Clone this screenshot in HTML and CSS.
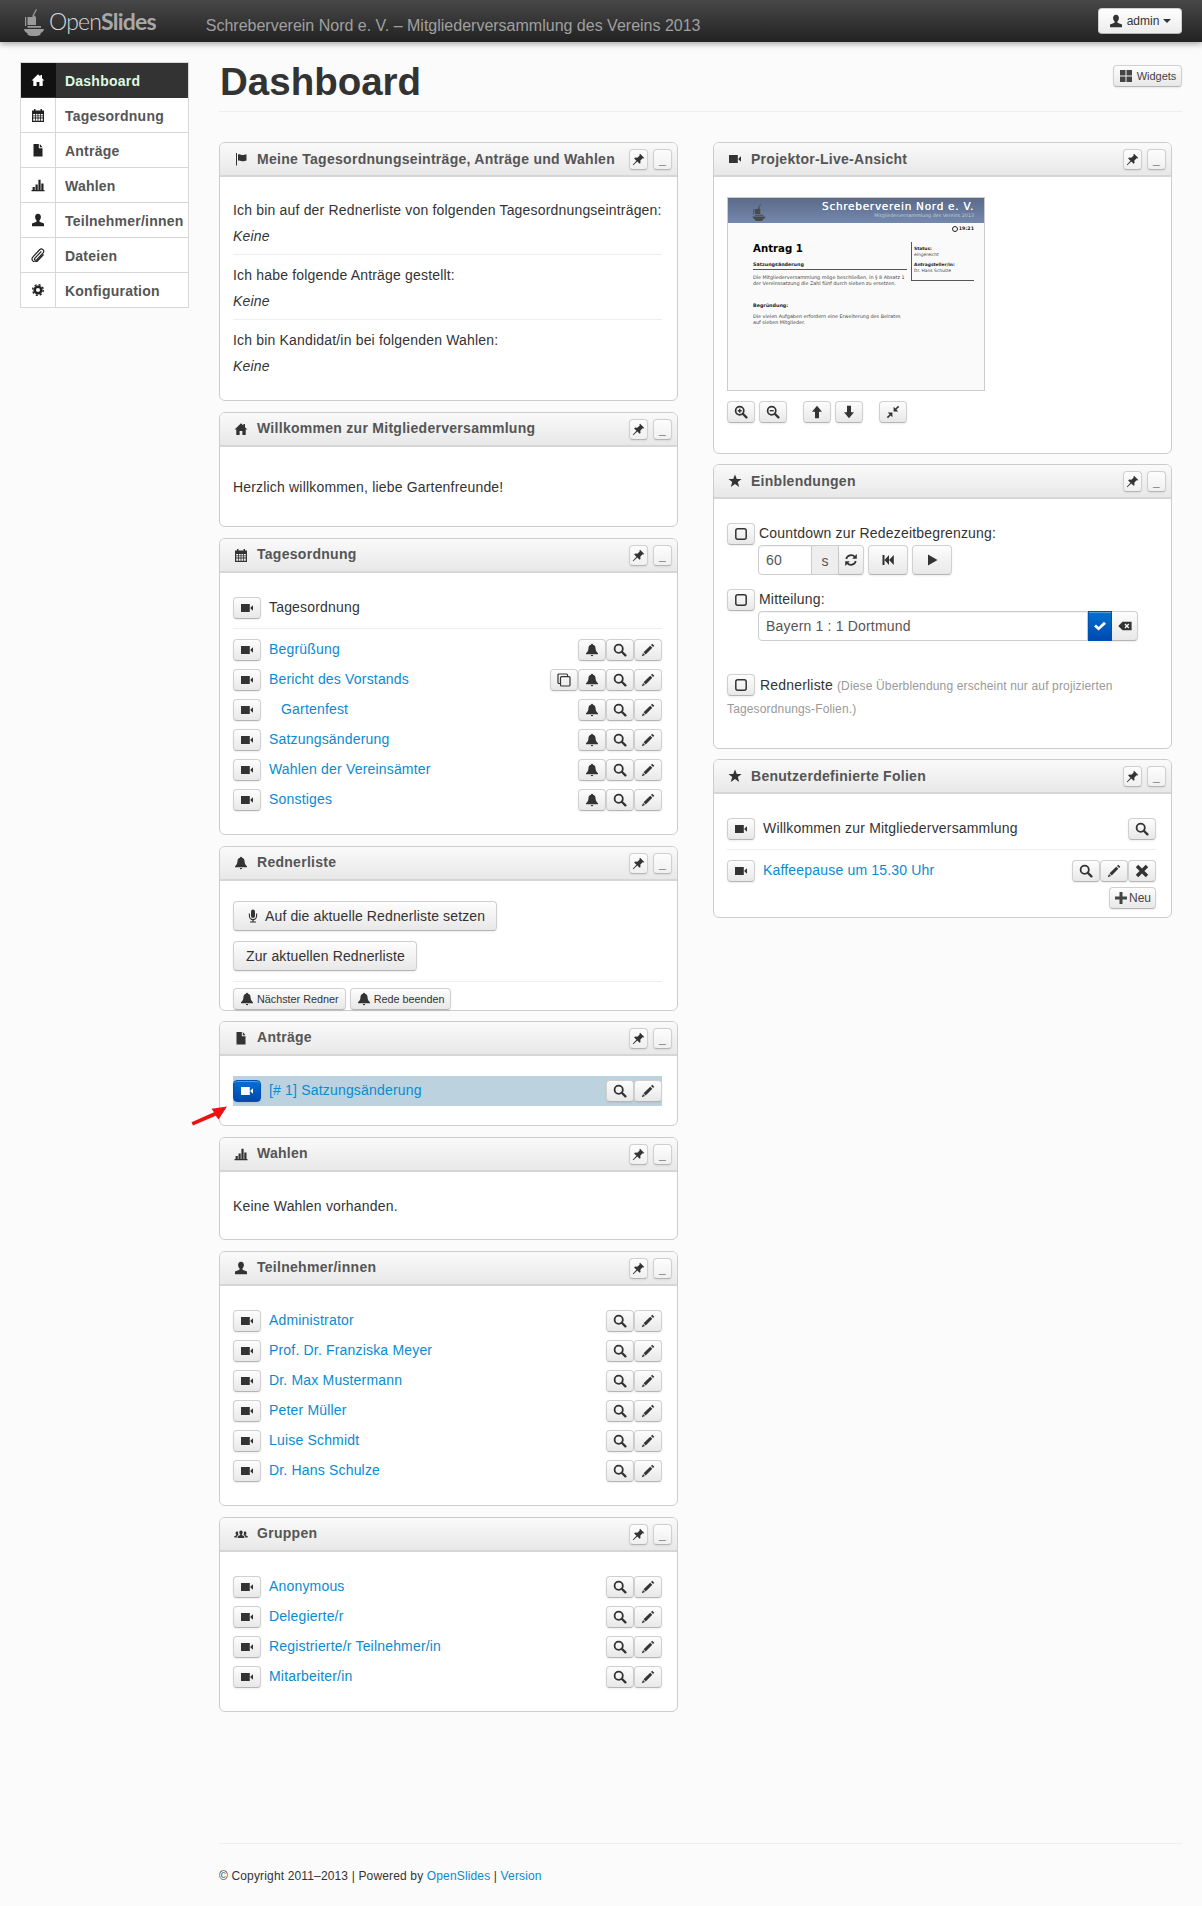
FILE: index.html
```html
<!DOCTYPE html>
<html lang="de">
<head>
<meta charset="utf-8">
<title>Dashboard – OpenSlides</title>
<link rel="stylesheet" href="styles.css">
</head>
<body>
<svg class="sprite" xmlns="http://www.w3.org/2000/svg">
<symbol id="home" viewBox="0 0 14 14"><path d="M7 1.2.6 7.6H2.3V13H5.6V9H8.4V13H11.7V7.6H13.4L11 5.2V2H9.4V3.6z"/></symbol>
<symbol id="cal" viewBox="0 0 14 14"><path fill-rule="evenodd" d="M1 2.5H3V1H4.5V2.5H9.500V1H11V2.500H13V14H1zM2.200 6V7.400H4V6zM4.800 6V7.400H6.600V6zM7.400 6V7.400H9.200V6zM10 6V7.400H11.800V6zM2.200 8.200V9.600H4V8.200zM4.800 8.200V9.600H6.600V8.200zM7.400 8.200V9.600H9.200V8.200zM10 8.200V9.600H11.800V8.200zM2.200 10.400V12.800H4V10.400zM4.800 10.400V12.800H6.600V10.400zM7.400 10.400V12.800H9.200V10.400zM10 10.400V12.800H11.800V10.400z"/></symbol>
<symbol id="file" viewBox="0 0 14 14"><path d="M2.500 1H7.800V5.200H11.500V13.500H2.500zM8.800 1 11.500 4.200H8.800z"/></symbol>
<symbol id="chart" viewBox="0 0 14 14"><path d="M.5 12H13.500V13.300H.5zM1.600 9H3.800V12H1.600zM4.500 6.500H6.700V12H4.500zM7.400 1.800H9.600V12H7.400zM10.300 5.500H12.500V12H10.300z"/></symbol>
<symbol id="user" viewBox="0 0 14 14"><path d="M7 .8C5.100.8 4.100 2.200 4.100 4c0 1.500.7 2.700 1.400 3.300V8.700L1 10.600V13.200H13V10.600L8.500 8.700V7.300C9.200 6.700 9.900 5.500 9.900 4 9.900 2.200 8.900.8 7 .8z"/></symbol>
<symbol id="clip" viewBox="0 0 14 14"><path fill="none" stroke="currentColor" stroke-width="1.200" d="M10.300 3.300 3.800 10.300A1.200 1.200 0 0 0 5.600 11.900L12.300 4.700A2.400 2.400 0 0 0 8.800 1.500L2 8.800A3 3 0 0 0 6.400 13L12.500 6.500"/></symbol>
<symbol id="cog" viewBox="0 0 14 14"><circle cx="7" cy="7" r="3.300" fill="none" stroke="currentColor" stroke-width="2.600"/><circle cx="7" cy="7" r="5.300" fill="none" stroke="currentColor" stroke-width="1.400" stroke-dasharray="2.100 2.060"/></symbol>
<symbol id="flag" viewBox="0 0 14 14"><path d="M2 1H3V13.500H2zM4 2.500C6 1.600 7 3 9 3S11.500 2.500 12.500 2.300V8.500C11.500 8.800 10.500 9.300 9 9.300 7 9.300 6 7.800 4 8.700z"/></symbol>
<symbol id="pin" viewBox="0 0 14 14"><path d="M8.700.8 13.200 5.300 12.300 6 11.400 5.700 8.900 8.300 9.200 10.700 8.200 11.700 5.700 9.200 1.400 13.200.8 12.600 4.800 8.300 2.300 5.800 3.300 4.800 5.700 5.100 8.300 2.600 8 1.700z"/></symbol>
<symbol id="video" viewBox="0 0 14 14"><path d="M1 3H9.800V11H1zM10.500 6.600 13 4.200V9.800L10.500 7.400z"/></symbol>
<symbol id="star" viewBox="0 0 14 14"><path d="M7 .6 8.800 5H13.600L9.800 8 11.200 12.900 7 10.100 2.800 12.900 4.200 8 .4 5H5.200z"/></symbol>
<symbol id="bell" viewBox="0 0 14 14"><path d="M7 .7A1 1 0 0 1 8 1.700C10 2.300 10.600 3.800 10.600 5.800 10.600 8 12 9.300 13 10.300V11.200H1V10.300C2 9.300 3.400 8 3.400 5.800 3.400 3.800 4 2.300 6 1.700A1 1 0 0 1 7 .7zM5.800 12H8.200A1.200 1.200 0 0 1 5.800 12z"/></symbol>
<symbol id="search" viewBox="0 0 14 14"><circle cx="5.700" cy="5.700" r="4.100" fill="none" stroke="currentColor" stroke-width="1.800"/><path fill="none" stroke="currentColor" stroke-width="2.300" stroke-linecap="round" d="M8.800 8.800 12.400 12.400"/></symbol>
<symbol id="pencil" viewBox="0 0 14 14"><path d="M11.200.7 13.300 2.800 12.100 4 10 1.900zM9.200 2.700 11.300 4.800 4.700 11.400 2.600 9.300zM2 10 4 12 .8 13.200z"/></symbol>
<symbol id="copy" viewBox="0 0 14 14"><path fill="none" stroke="currentColor" stroke-width="1.200" d="M3.500 10.500H2A1 1 0 0 1 1 9.500V2A1 1 0 0 1 2 1H9.500A1 1 0 0 1 10.500 2V3.500M4.500 3.700H12A1 1 0 0 1 13 4.700V12A1 1 0 0 1 12 13H4.500A1 1 0 0 1 3.500 12V4.700A1 1 0 0 1 4.500 3.700z"/></symbol>
<symbol id="mic" viewBox="0 0 14 14"><path d="M5 2.500A2 2 0 0 1 9 2.500V7A2 2 0 0 1 5 7zM6.400 10.500H7.600V12.400H10V13.500H4V12.400H6.400z"/><path fill="none" stroke="currentColor" stroke-width="1.100" d="M3.400 4.500V7A3.600 3.600 0 0 0 10.600 7V4.500"/></symbol>
<symbol id="zin" viewBox="0 0 14 14"><circle cx="5.700" cy="5.700" r="4.100" fill="none" stroke="currentColor" stroke-width="1.700"/><path fill="none" stroke="currentColor" stroke-width="2.300" stroke-linecap="round" d="M8.800 8.800 12.400 12.400"/><path d="M5 3.700H6.400V5H7.700V6.400H6.400V7.700H5V6.400H3.700V5H5z"/></symbol>
<symbol id="zout" viewBox="0 0 14 14"><circle cx="5.700" cy="5.700" r="4.100" fill="none" stroke="currentColor" stroke-width="1.700"/><path fill="none" stroke="currentColor" stroke-width="2.300" stroke-linecap="round" d="M8.800 8.800 12.400 12.400"/><path d="M3.700 5H7.700V6.400H3.700z"/></symbol>
<symbol id="up" viewBox="0 0 14 14"><path d="M7 .8 12 6.800H9V13.200H5V6.800H2z"/></symbol>
<symbol id="down" viewBox="0 0 14 14"><path d="M7 13.200 12 7.200H9V.8H5V7.200H2z"/></symbol>
<symbol id="shrink" viewBox="0 0 14 14"><path d="M7.600 6.400V1.800L9.400 3.600 12 .8 13.200 2 10.400 4.600 12.200 6.400zM6.400 7.600V12.200L4.600 10.400 2 13.200.8 12 3.600 9.400 1.800 7.600z"/></symbol>
<symbol id="box" viewBox="0 0 14 14"><rect x="1.800" y="1.800" width="10.400" height="10.400" rx="2" fill="none" stroke="currentColor" stroke-width="1.500"/></symbol>
<symbol id="refresh" viewBox="0 0 14 14"><path fill="none" stroke="currentColor" stroke-width="1.700" d="M2.200 6A5 5 0 0 1 10.800 3.900M11.800 8A5 5 0 0 1 3.200 10.100"/><path d="M12.800 1V5.700H8.200zM1.200 13V8.300H5.800z"/></symbol>
<symbol id="fback" viewBox="0 0 14 14"><path d="M1.500 2H3.500V12H1.500zM3.500 7 8 2V12zM8 7 12.800 2V12z"/></symbol>
<symbol id="play" viewBox="0 0 14 14"><path d="M3 1.500 12.500 7 3 12.500z"/></symbol>
<symbol id="ok" viewBox="0 0 14 14"><path d="M1 7.600 3 5.600 5.600 8 11 2.700 13 4.700 5.600 11.500z"/></symbol>
<symbol id="bksp" viewBox="0 0 14 14"><path fill-rule="evenodd" d="M4.500 2.700H13.600V11.300H4.500L.3 7zM7.500 4.600 6.500 5.600 7.900 7 6.500 8.400 7.500 9.400 8.900 8 10.300 9.400 11.300 8.400 9.900 7 11.300 5.600 10.300 4.600 8.900 6z"/></symbol>
<symbol id="remove" viewBox="0 0 14 14"><path d="M3.200 .8 7 4.600 10.800 .8 13.200 3.200 9.400 7 13.200 10.800 10.800 13.200 7 9.400 3.200 13.200 .8 10.800 4.600 7 .8 3.200z"/></symbol>
<symbol id="plus" viewBox="0 0 14 14"><path d="M5.500 1H8.500V5.500H13V8.500H8.500V13H5.500V8.500H1V5.500H5.500z"/></symbol>
<symbol id="grid" viewBox="0 0 14 14"><path d="M1 1H6.500V6.500H1zM7.500 1H13V6.500H7.500zM1 7.500H6.500V13H1zM7.500 7.500H13V13H7.500z"/></symbol>
<symbol id="group" viewBox="0 0 14 14"><path d="M7 3.500C5.800 3.500 5.300 4.400 5.300 5.500 5.300 6.300 5.700 7 6.200 7.400V8.100L3.700 9.300V11H10.300V9.300L7.800 8.100V7.400C8.300 7 8.700 6.300 8.700 5.500 8.700 4.400 8.200 3.500 7 3.500zM3 4.600C2 4.600 1.600 5.300 1.600 6.200 1.600 6.900 1.900 7.400 2.300 7.700V8.300L.3 9.300V10.600H2.900V9L4.600 8.100C4.200 7.600 4 6.900 4 6.100 4 5.700 4 5.300 4.200 5 3.900 4.700 3.500 4.600 3 4.600zM11 4.600C10.500 4.600 10.100 4.700 9.800 5 10 5.300 10 5.700 10 6.100 10 6.900 9.800 7.600 9.400 8.100L11.100 9V10.600H13.700V9.300L11.700 8.300V7.700C12.100 7.400 12.400 6.900 12.400 6.200 12.400 5.300 12 4.600 11 4.600z"/></symbol>
<symbol id="logo" viewBox="0 0 22 30"><path d="M2 11H3.200V20H2zM1 23H21C20.800 25 19.500 26.500 17.500 27.300V28.500C17.500 29.300 15 30 11 30S4.500 29.300 4.500 28.500V27.300C2.500 26.500 1.200 25 1 23z"/><path d="M4.500 20H18V21.700H4.500zM4.500 11H9.500V9.500L13 3 14 3.600 11 9.500 13 11V19H4.500z"/></symbol>
</svg>

<header class="navbar">
  <a class="brand"><svg class="logo"><use href="#logo"/></svg><span class="brand-name"><span class="brand-light">Open</span><span class="brand-bold">Slides</span></span></a>
  <span class="event">Schreberverein Nord e. V. – Mitgliederversammlung des Vereins 2013</span>
  <button class="btn btn-user"><svg class="i"><use href="#user"/></svg> admin <span class="caret"></span></button>
</header>

<div class="page">
  <nav class="sidenav">
    <a class="nav-item active"><span class="nav-ic"><svg class="i"><use href="#home"/></svg></span><span class="nav-tx">Dashboard</span></a>
    <a class="nav-item"><span class="nav-ic"><svg class="i"><use href="#cal"/></svg></span><span class="nav-tx">Tagesordnung</span></a>
    <a class="nav-item"><span class="nav-ic"><svg class="i"><use href="#file"/></svg></span><span class="nav-tx">Anträge</span></a>
    <a class="nav-item"><span class="nav-ic"><svg class="i"><use href="#chart"/></svg></span><span class="nav-tx">Wahlen</span></a>
    <a class="nav-item"><span class="nav-ic"><svg class="i"><use href="#user"/></svg></span><span class="nav-tx">Teilnehmer/innen</span></a>
    <a class="nav-item"><span class="nav-ic"><svg class="i"><use href="#clip"/></svg></span><span class="nav-tx">Dateien</span></a>
    <a class="nav-item"><span class="nav-ic"><svg class="i"><use href="#cog"/></svg></span><span class="nav-tx">Konfiguration</span></a>
  </nav>

  <main class="main">
    <div class="page-head">
      <h1>Dashboard</h1>
      <button class="btn btn-widgets"><svg class="i"><use href="#grid"/></svg> Widgets</button>
    </div>

    <div class="columns">
      <div class="col col-left">
        <section class="widget">
          <div class="w-head"><svg class="i"><use href="#flag"/></svg><h3>Meine Tagesordnungseinträge, Anträge und Wahlen</h3><span class="w-acts"><button class="btn w-btn"><svg class="i i-s"><use href="#pin"/></svg></button><button class="btn w-btn w-min">_</button></span></div>
          <div class="w-body b-mine">
            <div class="mine"><p>Ich bin auf der Rednerliste von folgenden Tagesordnungseinträgen:</p><p><em>Keine</em></p></div>
            <div class="mine"><p>Ich habe folgende Anträge gestellt:</p><p><em>Keine</em></p></div>
            <div class="mine"><p>Ich bin Kandidat/in bei folgenden Wahlen:</p><p><em>Keine</em></p></div>
          </div>
        </section>

        <section class="widget">
          <div class="w-head"><svg class="i"><use href="#home"/></svg><h3>Willkommen zur Mitgliederversammlung</h3><span class="w-acts"><button class="btn w-btn"><svg class="i i-s"><use href="#pin"/></svg></button><button class="btn w-btn w-min">_</button></span></div>
          <div class="w-body b-welcome">Herzlich willkommen, liebe Gartenfreunde!</div>
        </section>

        <section class="widget">
          <div class="w-head"><svg class="i"><use href="#cal"/></svg><h3>Tagesordnung</h3><span class="w-acts"><button class="btn w-btn"><svg class="i i-s"><use href="#pin"/></svg></button><button class="btn w-btn w-min">_</button></span></div>
          <div class="w-body">
            <div class="row row-sep"><button class="btn sq"><svg class="i"><use href="#video"/></svg></button><span class="row-tx">Tagesordnung</span></div>
            <div class="row"><button class="btn sq"><svg class="i"><use href="#video"/></svg></button><a class="row-tx link">Begrüßung</a><span class="acts"><button class="btn sq"><svg class="i"><use href="#bell"/></svg></button><button class="btn sq"><svg class="i"><use href="#search"/></svg></button><button class="btn sq"><svg class="i"><use href="#pencil"/></svg></button></span></div>
            <div class="row"><button class="btn sq"><svg class="i"><use href="#video"/></svg></button><a class="row-tx link">Bericht des Vorstands</a><span class="acts"><button class="btn sq"><svg class="i"><use href="#copy"/></svg></button><button class="btn sq"><svg class="i"><use href="#bell"/></svg></button><button class="btn sq"><svg class="i"><use href="#search"/></svg></button><button class="btn sq"><svg class="i"><use href="#pencil"/></svg></button></span></div>
            <div class="row"><button class="btn sq"><svg class="i"><use href="#video"/></svg></button><a class="row-tx link indent">Gartenfest</a><span class="acts"><button class="btn sq"><svg class="i"><use href="#bell"/></svg></button><button class="btn sq"><svg class="i"><use href="#search"/></svg></button><button class="btn sq"><svg class="i"><use href="#pencil"/></svg></button></span></div>
            <div class="row"><button class="btn sq"><svg class="i"><use href="#video"/></svg></button><a class="row-tx link">Satzungsänderung</a><span class="acts"><button class="btn sq"><svg class="i"><use href="#bell"/></svg></button><button class="btn sq"><svg class="i"><use href="#search"/></svg></button><button class="btn sq"><svg class="i"><use href="#pencil"/></svg></button></span></div>
            <div class="row"><button class="btn sq"><svg class="i"><use href="#video"/></svg></button><a class="row-tx link">Wahlen der Vereinsämter</a><span class="acts"><button class="btn sq"><svg class="i"><use href="#bell"/></svg></button><button class="btn sq"><svg class="i"><use href="#search"/></svg></button><button class="btn sq"><svg class="i"><use href="#pencil"/></svg></button></span></div>
            <div class="row"><button class="btn sq"><svg class="i"><use href="#video"/></svg></button><a class="row-tx link">Sonstiges</a><span class="acts"><button class="btn sq"><svg class="i"><use href="#bell"/></svg></button><button class="btn sq"><svg class="i"><use href="#search"/></svg></button><button class="btn sq"><svg class="i"><use href="#pencil"/></svg></button></span></div>
          </div>
        </section>

        <section class="widget w-tight">
          <div class="w-head"><svg class="i"><use href="#bell"/></svg><h3>Rednerliste</h3><span class="w-acts"><button class="btn w-btn"><svg class="i i-s"><use href="#pin"/></svg></button><button class="btn w-btn w-min">_</button></span></div>
          <div class="w-body b-speakers">
            <button class="btn big"><svg class="i"><use href="#mic"/></svg> Auf die aktuelle Rednerliste setzen</button>
            <button class="btn big">Zur aktuellen Rednerliste</button>
            <div class="speak-foot"><button class="btn small"><svg class="i"><use href="#bell"/></svg> Nächster Redner</button><button class="btn small"><svg class="i"><use href="#bell"/></svg> Rede beenden</button></div>
          </div>
        </section>

        <section class="widget w-motions">
          <div class="w-head"><svg class="i"><use href="#file"/></svg><h3>Anträge</h3><span class="w-acts"><button class="btn w-btn"><svg class="i i-s"><use href="#pin"/></svg></button><button class="btn w-btn w-min">_</button></span></div>
          <div class="w-body b-motions">
            <div class="row row-active"><button class="btn sq btn-primary"><svg class="i"><use href="#video"/></svg></button><a class="row-tx link">[# 1] Satzungsänderung</a><span class="acts"><button class="btn sq"><svg class="i"><use href="#search"/></svg></button><button class="btn sq"><svg class="i"><use href="#pencil"/></svg></button></span></div>
          </div>
          <svg class="red-arrow" viewBox="0 0 36 20"><path d="M36 .5 27.500 13.500 24.700 9.700 2 19.500.5 16.200 23 6.300 20.500 2.800z"/></svg>
        </section>

        <section class="widget">
          <div class="w-head"><svg class="i"><use href="#chart"/></svg><h3>Wahlen</h3><span class="w-acts"><button class="btn w-btn"><svg class="i i-s"><use href="#pin"/></svg></button><button class="btn w-btn w-min">_</button></span></div>
          <div class="w-body">Keine Wahlen vorhanden.</div>
        </section>

        <section class="widget">
          <div class="w-head"><svg class="i"><use href="#user"/></svg><h3>Teilnehmer/innen</h3><span class="w-acts"><button class="btn w-btn"><svg class="i i-s"><use href="#pin"/></svg></button><button class="btn w-btn w-min">_</button></span></div>
          <div class="w-body">
            <div class="row"><button class="btn sq"><svg class="i"><use href="#video"/></svg></button><a class="row-tx link">Administrator</a><span class="acts"><button class="btn sq"><svg class="i"><use href="#search"/></svg></button><button class="btn sq"><svg class="i"><use href="#pencil"/></svg></button></span></div>
            <div class="row"><button class="btn sq"><svg class="i"><use href="#video"/></svg></button><a class="row-tx link">Prof. Dr. Franziska Meyer</a><span class="acts"><button class="btn sq"><svg class="i"><use href="#search"/></svg></button><button class="btn sq"><svg class="i"><use href="#pencil"/></svg></button></span></div>
            <div class="row"><button class="btn sq"><svg class="i"><use href="#video"/></svg></button><a class="row-tx link">Dr. Max Mustermann</a><span class="acts"><button class="btn sq"><svg class="i"><use href="#search"/></svg></button><button class="btn sq"><svg class="i"><use href="#pencil"/></svg></button></span></div>
            <div class="row"><button class="btn sq"><svg class="i"><use href="#video"/></svg></button><a class="row-tx link">Peter Müller</a><span class="acts"><button class="btn sq"><svg class="i"><use href="#search"/></svg></button><button class="btn sq"><svg class="i"><use href="#pencil"/></svg></button></span></div>
            <div class="row"><button class="btn sq"><svg class="i"><use href="#video"/></svg></button><a class="row-tx link">Luise Schmidt</a><span class="acts"><button class="btn sq"><svg class="i"><use href="#search"/></svg></button><button class="btn sq"><svg class="i"><use href="#pencil"/></svg></button></span></div>
            <div class="row"><button class="btn sq"><svg class="i"><use href="#video"/></svg></button><a class="row-tx link">Dr. Hans Schulze</a><span class="acts"><button class="btn sq"><svg class="i"><use href="#search"/></svg></button><button class="btn sq"><svg class="i"><use href="#pencil"/></svg></button></span></div>
          </div>
        </section>

        <section class="widget">
          <div class="w-head"><svg class="i"><use href="#group"/></svg><h3>Gruppen</h3><span class="w-acts"><button class="btn w-btn"><svg class="i i-s"><use href="#pin"/></svg></button><button class="btn w-btn w-min">_</button></span></div>
          <div class="w-body">
            <div class="row"><button class="btn sq"><svg class="i"><use href="#video"/></svg></button><a class="row-tx link">Anonymous</a><span class="acts"><button class="btn sq"><svg class="i"><use href="#search"/></svg></button><button class="btn sq"><svg class="i"><use href="#pencil"/></svg></button></span></div>
            <div class="row"><button class="btn sq"><svg class="i"><use href="#video"/></svg></button><a class="row-tx link">Delegierte/r</a><span class="acts"><button class="btn sq"><svg class="i"><use href="#search"/></svg></button><button class="btn sq"><svg class="i"><use href="#pencil"/></svg></button></span></div>
            <div class="row"><button class="btn sq"><svg class="i"><use href="#video"/></svg></button><a class="row-tx link">Registrierte/r Teilnehmer/in</a><span class="acts"><button class="btn sq"><svg class="i"><use href="#search"/></svg></button><button class="btn sq"><svg class="i"><use href="#pencil"/></svg></button></span></div>
            <div class="row"><button class="btn sq"><svg class="i"><use href="#video"/></svg></button><a class="row-tx link">Mitarbeiter/in</a><span class="acts"><button class="btn sq"><svg class="i"><use href="#search"/></svg></button><button class="btn sq"><svg class="i"><use href="#pencil"/></svg></button></span></div>
          </div>
        </section>
      </div>

      <div class="col">
        <section class="widget w-tight">
          <div class="w-head"><svg class="i"><use href="#video"/></svg><h3>Projektor-Live-Ansicht</h3><span class="w-acts"><button class="btn w-btn"><svg class="i i-s"><use href="#pin"/></svg></button><button class="btn w-btn w-min">_</button></span></div>
          <div class="w-body b-live">
            <div class="thumb">
              <div class="t-head">
                <svg class="t-logo"><use href="#logo"/></svg>
                <div class="t-titles"><div class="t-title">Schreberverein Nord e. V.</div><div class="t-sub">Mitgliederversammlung des Vereins 2013</div></div>
              </div>
              <div class="t-time"><span class="t-clock"></span>19:21</div>
              <div class="t-body">
                <div class="t-main">
                  <div class="t-h1">Antrag 1</div>
                  <div class="t-h2">Satzungsänderung</div>
                  <p class="t-p">Die Mitgliederversammlung möge beschließen, in § 8 Absatz 1 der Vereinssatzung die Zahl fünf durch sieben zu ersetzen.</p>
                  <div class="t-h3">Begründung:</div>
                  <p class="t-p">Die vielen Aufgaben erfordern eine Erweiterung des Beirates auf sieben Mitglieder.</p>
                </div>
                <div class="t-side"><b>Status:</b><span>eingereicht</span><b class="t-gap">Antragsteller/in:</b><span>Dr. Hans Schulze</span></div>
              </div>
            </div>
            <div class="live-tools"><button class="btn sq"><svg class="i"><use href="#zin"/></svg></button><button class="btn sq"><svg class="i"><use href="#zout"/></svg></button><button class="btn sq lt-gap"><svg class="i"><use href="#up"/></svg></button><button class="btn sq"><svg class="i"><use href="#down"/></svg></button><button class="btn sq lt-gap"><svg class="i"><use href="#shrink"/></svg></button></div>
          </div>
        </section>

        <section class="widget w-tight">
          <div class="w-head"><svg class="i"><use href="#star"/></svg><h3>Einblendungen</h3><span class="w-acts"><button class="btn w-btn"><svg class="i i-s"><use href="#pin"/></svg></button><button class="btn w-btn w-min">_</button></span></div>
          <div class="w-body b-overlays">
            <div class="ov"><button class="btn sq"><svg class="i"><use href="#box"/></svg></button><span class="ov-label">Countdown zur Redezeitbegrenzung:</span></div>
            <div class="ov-ctrl">
              <span class="input w60">60</span><span class="addon">s</span><button class="btn addon-btn"><svg class="i"><use href="#refresh"/></svg></button>
              <button class="btn ctl"><svg class="i"><use href="#fback"/></svg></button><button class="btn ctl"><svg class="i"><use href="#play"/></svg></button>
            </div>
            <div class="ov ov-next"><button class="btn sq"><svg class="i"><use href="#box"/></svg></button><span class="ov-label">Mitteilung:</span></div>
            <div class="ov-ctrl">
              <span class="input wmsg">Bayern 1 : 1 Dortmund</span><button class="btn btn-primary addon-ok"><svg class="i"><use href="#ok"/></svg></button><button class="btn addon-del"><svg class="i"><use href="#bksp"/></svg></button>
            </div>
            <p class="ov-list"><button class="btn sq"><svg class="i"><use href="#box"/></svg></button> <span class="ov-name">Rednerliste</span> <small>(Diese Überblendung erscheint nur auf projizierten Tagesordnungs-Folien.)</small></p>
          </div>
        </section>

        <section class="widget">
          <div class="w-head"><svg class="i"><use href="#star"/></svg><h3>Benutzerdefinierte Folien</h3><span class="w-acts"><button class="btn w-btn"><svg class="i i-s"><use href="#pin"/></svg></button><button class="btn w-btn w-min">_</button></span></div>
          <div class="w-body b-custom">
            <div class="row row-sep"><button class="btn sq"><svg class="i"><use href="#video"/></svg></button><span class="row-tx">Willkommen zur Mitgliederversammlung</span><span class="acts"><button class="btn sq"><svg class="i"><use href="#search"/></svg></button></span></div>
            <div class="row row-tight"><button class="btn sq"><svg class="i"><use href="#video"/></svg></button><a class="row-tx link">Kaffeepause um 15.30 Uhr</a><span class="acts"><button class="btn sq"><svg class="i"><use href="#search"/></svg></button><button class="btn sq"><svg class="i"><use href="#pencil"/></svg></button><button class="btn sq"><svg class="i"><use href="#remove"/></svg></button></span></div>
            <div class="new-wrap"><button class="btn btn-new"><svg class="i"><use href="#plus"/></svg>Neu</button></div>
          </div>
        </section>
      </div>
    </div>

    <footer class="footer">© Copyright 2011–2013 | Powered by <a class="link">OpenSlides</a> | <a class="link">Version</a></footer>
  </main>
</div>
</body>
</html>
```

FILE: styles.css
```css
* { box-sizing: border-box; }
html, body { margin: 0; padding: 0; }
body {
  background: #fbfbfb;
  color: #333;
  font: 14px/20px "Liberation Sans", Arial, sans-serif;
  letter-spacing: .18px;
  height: 1906px;
  overflow: hidden;
}
p { margin: 0; }
.sprite { display: none; }
.i { width: 14px; height: 14px; fill: currentColor; flex: none; display: block; }
.i-s { width: 13px; height: 13px; }
.link { color: #0a8ad2; text-decoration: none; }

.btn {
  display: inline-flex;
  align-items: center;
  justify-content: center;
  margin: 0;
  padding: 0;
  font: 14px/20px "Liberation Sans", Arial, sans-serif;
  letter-spacing: inherit;
  color: #333;
  background: linear-gradient(#fdfdfd, #e8e8e8);
  border: 1px solid #d0d0d0;
  border-bottom-color: #b5b5b5;
  border-radius: 4px;
  box-shadow: inset 0 1px 0 rgba(255, 255, 255, .3), 0 1px 2px rgba(0, 0, 0, .08);
}
.btn-primary {
  background: linear-gradient(#0072d0, #0048b0);
  border-color: #0050b5;
  color: #fff;
}
.sq { width: 28px; height: 22px; }

.navbar {
  height: 42px;
  display: flex;
  align-items: center;
  padding: 0 20px 0 23px;
  background: linear-gradient(#484848, #222);
  box-shadow: 0 2px 6px rgba(0, 0, 0, .35);
  letter-spacing: 0;
}
.brand { display: flex; align-items: center; color: #ccc; }
.logo { width: 22px; height: 30px; fill: #9a9a9a; margin-top: -1px; }
.brand-name { font: 300 23px/30px Lato, sans-serif; margin-left: 4px; letter-spacing: -.8px; }
.brand-light { color: #d8d8d8; }
.brand-bold { color: #a8a8a8; font-weight: 700; }
.event { color: #a0a0a0; font-size: 16px; margin: 10px 0 0 50px; white-space: nowrap; }
.btn-user {
  margin-left: auto;
  width: 84px;
  height: 26px;
  font-size: 12px;
  gap: 4px;
  background: linear-gradient(#fff, #ececec);
  letter-spacing: 0;
}
.caret {
  border-top: 4px solid #333;
  border-left: 4px solid transparent;
  border-right: 4px solid transparent;
  width: 0;
  height: 0;
}

.page { display: flex; padding: 20px 20px 0; gap: 30px; align-items: flex-start; }
.sidenav {
  width: 169px;
  flex: none;
  background: #fff;
  border: 1px solid #d8d8d8;
  border-bottom-width: 0;
}
.nav-item {
  display: flex;
  height: 35px;
  border-bottom: 1px solid #d8d8d8;
  color: #555;
  font-weight: 700;
  align-items: stretch;
  letter-spacing: .23px;
}
.nav-item.active { background: #333; color: #ddfbe0; border-bottom-color: #333; }
.nav-ic {
  width: 35px;
  flex: none;
  display: flex;
  align-items: center;
  justify-content: center;
  color: #222;
  border-right: 1px solid #d8d8d8;
}
.active .nav-ic { background: #111; color: #fff; border-right-color: #111; }
.nav-tx { padding: 8px 0 0 9px; white-space: nowrap; }

.main { width: 963px; flex: none; }
.page-head {
  height: 50px;
  display: flex;
  align-items: flex-start;
  justify-content: space-between;
  padding-left: 1px;
  margin-bottom: 30px;
  border-bottom: 1px solid #eee;
}
h1 { margin: 0; font-size: 38.5px; line-height: 40px; color: #333; font-weight: 700; letter-spacing: 0; }
.btn-widgets {
  width: 69px;
  height: 22px;
  margin-top: 3px;
  font-size: 11px;
  gap: 4px;
  color: #444;
  letter-spacing: 0;
}
.columns { display: flex; gap: 35px; align-items: flex-start; }
.col { width: 459px; flex: none; }

.widget {
  position: relative;
  background: #fff;
  border: 1px solid #ccc;
  border-radius: 6px;
  margin-bottom: 11px;
}
.w-tight { margin-bottom: 10px; }
.w-head {
  height: 34px;
  display: flex;
  align-items: center;
  padding: 0 5px 0 14px;
  color: #333;
  background: linear-gradient(#fafafa, #e8e8e8);
  border-bottom: 2px solid #d6d6d6;
  border-radius: 5px 5px 0 0;
}
.w-head h3 {
  margin: 0 0 0 9px;
  font-size: 14px;
  line-height: 20px;
  font-weight: 700;
  color: #555;
  white-space: nowrap;
  letter-spacing: .28px;
}
.col-left .widget + .widget h3 { margin-bottom: 2px; }
.w-acts { margin-left: auto; display: flex; gap: 5px; }
.w-btn { width: 19px; height: 21px; background: #fff linear-gradient(#fdfdfd, #f0f0f0); }
.w-min { color: #888; font-size: 12px; line-height: 14px; }
.w-body { padding: 24px 15px 23px 13px; }

.b-mine { padding: 23px 15px 16px 13px; }
.mine { padding-bottom: 8px; margin-bottom: 10px; border-bottom: 1px solid #eee; }
.mine p + p { margin-top: 6px; }
.mine:last-child { border-bottom: 0; margin-bottom: 0; }
.b-welcome { padding: 30px 15px 29px 13px; }

.row { display: flex; align-items: flex-start; margin-bottom: 8px; }
.row:last-child { margin-bottom: 0; }
.row-tx { margin-left: 8px; white-space: nowrap; }
.row-sep { padding-bottom: 9px; margin-bottom: 10px; border-bottom: 1px solid #eee; }
.indent { padding-left: 12px; }
.acts { margin-left: auto; display: flex; }

.b-speakers { padding: 20px 15px 0 13px; }
.big { display: flex; height: 30px; padding: 0 11px 0 12px; gap: 5px; margin-bottom: 10px; letter-spacing: .13px; }
.speak-foot { display: flex; gap: 4px; border-top: 1px solid #eee; padding-top: 6px; height: 29px; }
.small { height: 22px; padding: 0 6px; font-size: 10.8px; gap: 3px; letter-spacing: 0; }

.b-motions { padding: 20px 15px 19px 13px; }
.row-active { background: #bcd3df; height: 30px; align-items: center; margin: 0; }
.row-active .row-tx { position: relative; top: -1px; }
.red-arrow {
  position: absolute;
  left: -29px;
  top: 84px;
  width: 36px;
  height: 20px;
  fill: #ee1111;
}

.b-live { padding: 20px 15px 30px 13px; }
.thumb {
  width: 258px;
  height: 194px;
  background: #fafafa;
  border: 1px solid #ccc;
  font-family: "DejaVu Sans", sans-serif;
  color: #222;
  overflow: hidden;
  letter-spacing: 0;
}
.t-head {
  height: 25px;
  display: flex;
  justify-content: space-between;
  padding: 2px 10px 0 24px;
  background: linear-gradient(#5b6a88, #7488ae);
}
.t-logo { width: 14px; height: 19px; fill: #4a4a4a; margin-top: 2px; }
.t-titles { text-align: right; }
.t-title { font-size: 10.5px; line-height: 13px; color: #fff; font-weight: 400; letter-spacing: .72px; white-space: nowrap; text-shadow: 0 0 .4px #fff; }
.t-sub { font-size: 4.8px; line-height: 6px; color: #c2ccdc; white-space: nowrap; }
.t-time {
  display: flex;
  justify-content: flex-end;
  align-items: center;
  gap: 1px;
  height: 12px;
  padding: 0 10px 0 0;
  font-size: 4.8px;
  font-weight: 700;
}
.t-clock { width: 6px; height: 6px; border: 1px solid #222; border-radius: 50%; }
.t-body { display: flex; padding: 6px 10px 0 25px; }
.t-main { width: 154px; flex: none; }
.t-h1 { font-size: 10.2px; line-height: 15px; font-weight: 700; color: #000; }
.t-h2 { font-size: 4.8px; line-height: 7px; font-weight: 700; margin-top: 5px; padding-bottom: 1px; border-bottom: 1px solid #555; }
.t-h3 { font-size: 4.8px; line-height: 7px; font-weight: 700; margin-top: 15.5px; }
.t-p { font-size: 4.85px; line-height: 6px; margin: 4px 0 0; color: #444; }
.t-side {
  flex: 1;
  margin: 1px 0 0 4px;
  height: 39px;
  padding: 4px 0 0 2px;
  display: flex;
  flex-direction: column;
  font-size: 4.4px;
  line-height: 5.5px;
  border-left: 1px solid #555;
  border-bottom: 1px solid #555;
  color: #444;
}
.t-side b { color: #222; }
.t-gap { margin-top: 5px; }
.live-tools { display: flex; gap: 4px; margin-top: 10px; }
.lt-gap { margin-left: 12px; }

.b-overlays { padding: 24px 15px 28px 13px; }
.ov { display: flex; }
.ov-next { margin-top: 14px; }
.ov-label { margin: 0 0 0 4px; white-space: nowrap; }
.ov-ctrl { display: flex; height: 30px; margin-left: 31px; }
.input {
  display: block;
  height: 30px;
  padding: 4px 7px;
  line-height: 20px;
  background: #fff;
  border: 1px solid #ccc;
  border-radius: 4px 0 0 4px;
  color: #555;
  box-shadow: inset 0 1px 1px rgba(0, 0, 0, .05);
}
.w60 { width: 54px; }
.wmsg { width: 330px; }
.addon {
  width: 27px;
  text-align: center;
  padding-top: 5px;
  color: #555;
  background: #eee;
  border: 1px solid #ccc;
  border-left: 0;
}
.addon-btn { width: 25px; height: 30px; border-left: 0; border-radius: 0 4px 4px 0; }
.ctl { width: 40px; height: 30px; margin-left: 4px; }
.addon-ok { width: 24px; height: 30px; border-radius: 0; }
.addon-del { width: 26px; height: 30px; border-left: 0; border-radius: 0 4px 4px 0; }
.ov-list { margin: 33px 0 0; line-height: 22px; }
.ov-list .btn { vertical-align: top; }
.ov-name { margin-left: 1px; }
.ov-list small { font-size: 12px; color: #999; letter-spacing: .15px; }

.b-custom { padding: 24px 15px 8px 13px; }
.row-tight { margin-bottom: 5px; }
.new-wrap { display: flex; justify-content: flex-end; }
.btn-new { width: 47px; height: 22px; font-size: 12px; color: #444; gap: 1px; letter-spacing: 0; }

.footer {
  margin-top: 120px;
  padding-top: 22px;
  border-top: 1px solid #eee;
  font-size: 12px;
  line-height: 20px;
  letter-spacing: .15px;
}
```
